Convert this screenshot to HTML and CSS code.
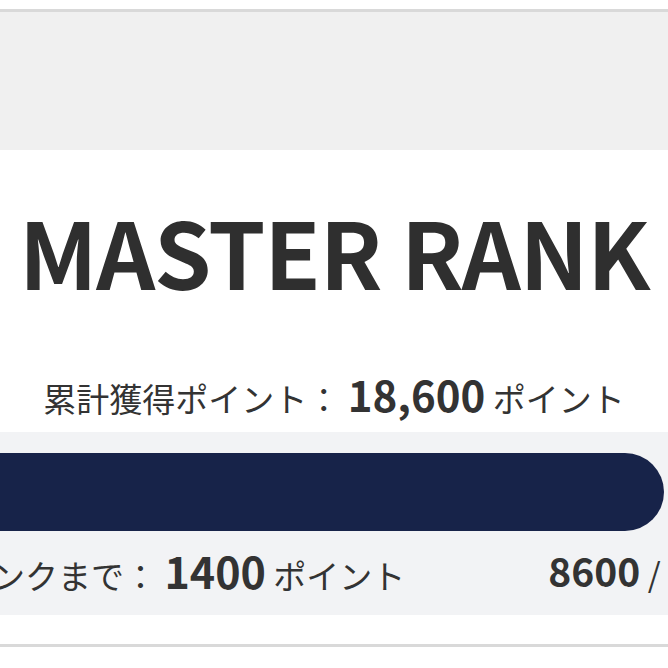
FILE: index.html
```html
<!DOCTYPE html>
<html lang="ja">
<head>
<meta charset="utf-8">
<title>Rank</title>
<link rel="stylesheet" href="styles.css">
</head>
<body>
<div class="card">
  <div class="card-head"></div>
  <div class="card-body">
    <h1 class="rank-title">MASTER RANK</h1>
    <p class="total">累計獲得ポイント： <strong class="total-num">18,600</strong> ポイント</p>
    <div class="progress">
      <div class="track"><div class="fill" style="width: 86%"></div></div>
      <div class="progress-info">
        <p class="next">次のランクまで： <strong class="next-num">1400</strong> ポイント</p>
        <p class="ratio"><strong class="ratio-num">8600</strong> / 10000 ポイント</p>
      </div>
    </div>
  </div>
</div>
</body>
</html>
```
FILE: styles.css
```css
html, body {
  margin: 0;
  padding: 0;
  background: #ffffff;
}
body {
  overflow: hidden;
  width: 668px;
  height: 668px;
  font-family: "Noto Sans CJK JP", "Noto Sans", sans-serif;
  color: #333333;
}
.card {
  margin-top: 9px;
  border-top: 3px solid #d9d9d9;
  border-bottom: 3px solid #d9d9d9;
}
.card-head {
  height: 138px;
  background: #f0f0f0;
}
.card-body {
  background: #ffffff;
  padding-bottom: 29px;
  text-align: center;
}
.rank-title {
  margin: 0;
  padding-top: 54px;
  font-size: 92px;
  line-height: 1;
  font-weight: 700;
  letter-spacing: -1.2px;
  color: #2f2f2f;
}
.total {
  margin: 74px 0 0;
  font-size: 33px;
  line-height: 48px;
  font-weight: 400;
}
.total-num {
  font-size: 42px;
  font-weight: 700;
}
.progress {
  margin-top: 10px;
  margin-left: -120px;
  width: 912px;
  background: #f2f3f5;
  padding: 21px 0 16px;
  text-align: left;
}
.track {
  height: 78px;
}
.fill {
  height: 100%;
  background: #172349;
  border-radius: 0 39px 39px 0;
}
.progress-info {
  display: flex;
  gap: 143px;
  margin-top: 15px;
  padding: 0 10px 0 13px;
}
.next, .ratio {
  margin: 0;
  font-size: 33px;
  line-height: 48px;
  white-space: nowrap;
}
.next-num {
  font-size: 43px;
  font-weight: 700;
}
.ratio-num {
  font-size: 39px;
  font-weight: 700;
}
```
